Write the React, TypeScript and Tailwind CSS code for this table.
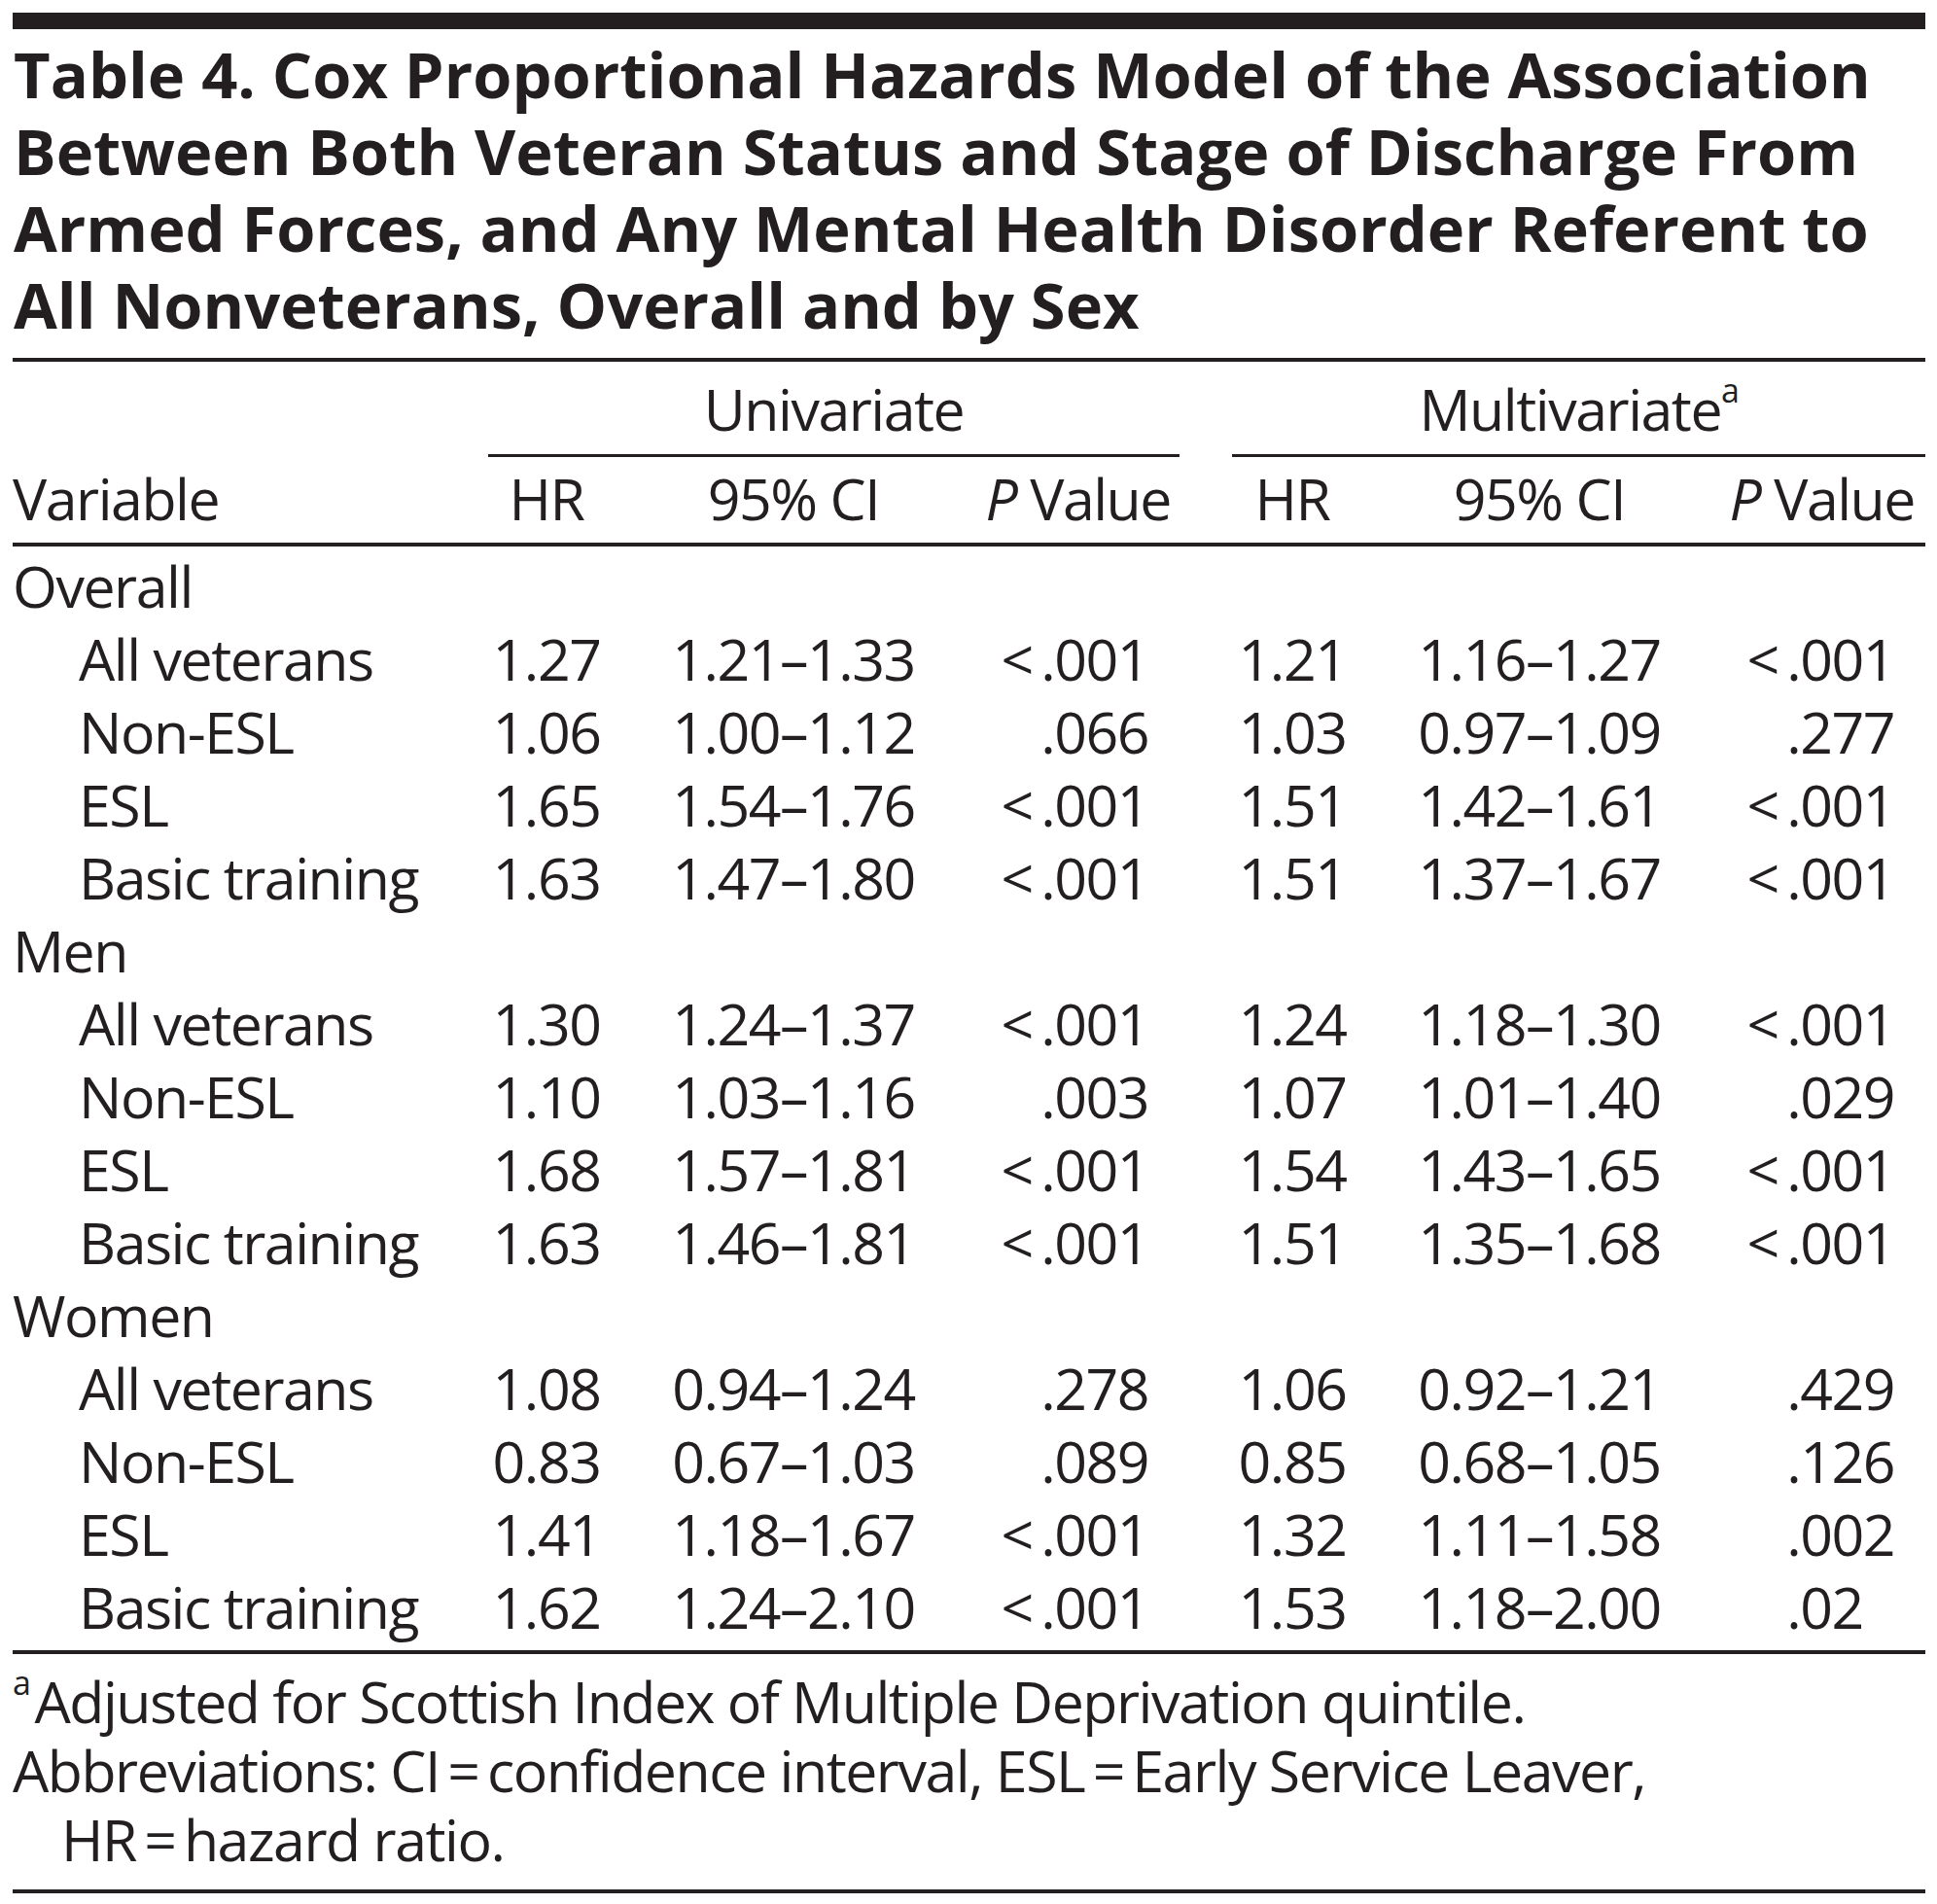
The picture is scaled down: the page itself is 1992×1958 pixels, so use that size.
const rows: [string, string[]][] = [
  ["Overall", []],
  ["All veterans", ["1.27", "1.21–1.33", "<\u2009.001", "1.21", "1.16–1.27", "<\u2009.001"]],
  ["Non-ESL", ["1.06", "1.00–1.12", ".066", "1.03", "0.97–1.09", ".277"]],
  ["ESL", ["1.65", "1.54–1.76", "<\u2009.001", "1.51", "1.42–1.61", "<\u2009.001"]],
  ["Basic training", ["1.63", "1.47–1.80", "<\u2009.001", "1.51", "1.37–1.67", "<\u2009.001"]],
  ["Men", []],
  ["All veterans", ["1.30", "1.24–1.37", "<\u2009.001", "1.24", "1.18–1.30", "<\u2009.001"]],
  ["Non-ESL", ["1.10", "1.03–1.16", ".003", "1.07", "1.01–1.40", ".029"]],
  ["ESL", ["1.68", "1.57–1.81", "<\u2009.001", "1.54", "1.43–1.65", "<\u2009.001"]],
  ["Basic training", ["1.63", "1.46–1.81", "<\u2009.001", "1.51", "1.35–1.68", "<\u2009.001"]],
  ["Women", []],
  ["All veterans", ["1.08", "0.94–1.24", ".278", "1.06", "0.92–1.21", ".429"]],
  ["Non-ESL", ["0.83", "0.67–1.03", ".089", "0.85", "0.68–1.05", ".126"]],
  ["ESL", ["1.41", "1.18–1.67", "<\u2009.001", "1.32", "1.11–1.58", ".002"]],
  ["Basic training", ["1.62", "1.24–2.10", "<\u2009.001", "1.53", "1.18–2.00", ".02"]],
];

// pad short p values so the decimal points line up
function PVal({ v }: { v: string }) {
  if (v === ".02") {
    return (
      <span>
        {v}
        <span className="invisible">1</span>
      </span>
    );
  }
  return <span>{v}</span>;
}

function Rule({ h }: { h: string }) {
  return <div className={`col-span-8 bg-[#231f20] ${h}`} />;
}

export default function App() {
  return (
    <div className="w-[1992px] h-[1958px] bg-white text-[#231f20] [font-family:'Open_Sans',sans-serif] pl-[13px] pt-[13px]">
      <div className="w-[1967px]">
        <div className="h-[17px] bg-[#231f20]" />
        <h1 className="mt-[7px] pl-[1px] text-[65px] leading-[79px] font-bold tracking-normal whitespace-nowrap">
          Table 4. Cox Proportional Hazards Model of the Association
          <br />
          Between Both Veteran Status and Stage of Discharge From
          <br />
          Armed Forces, and Any Mental Health Disorder Referent to
          <br />
          All Nonveterans, Overall and by Sex
        </h1>
        <div className="mt-[15px] h-[4px] bg-[#231f20]" />

        <div className="grid grid-cols-[489px_120px_388px_203px_54px_124px_384px_205px] text-[59px] leading-[75px] tracking-[-0.025em]">
          {/* spanning headers */}
          <div className="col-span-8 h-[11px]" />
          <div className="h-[75px]" />
          <div className="col-span-3 h-[75px] text-center">Univariate</div>
          <div className="h-[75px]" />
          <div className="col-span-3 h-[75px] text-center">
            Multivariate
            <sup className="text-[34px] leading-none relative -top-[8px] align-super">a</sup>
          </div>
          <div className="h-[9px]" />
          <div className="col-span-3 h-[3px] mt-[9px] bg-[#231f20]" />
          <div />
          <div className="col-span-3 h-[3px] mt-[9px] bg-[#231f20]" />

          {/* column headers */}
          <div className="col-span-8 h-[5px]" />
          <div className="h-[75px]">Variable</div>
          <div className="h-[75px] text-center">HR</div>
          <div className="h-[75px] text-center">95% CI</div>
          <div className="h-[75px] text-right pr-[9px]">
            <i>P</i> Value
          </div>
          <div />
          <div className="h-[75px] text-center">HR</div>
          <div className="h-[75px] text-center">95% CI</div>
          <div className="h-[75px] text-right pr-[11px]">
            <i>P</i> Value
          </div>
          <div className="col-span-8 h-[8px]" />
          <Rule h="h-[4px]" />
          <div className="col-span-8 h-[3px]" />

          {rows.map(([label, v], i) =>
            v.length === 0 ? (
              <div key={i} className="col-span-8 h-[75px]">
                {label}
              </div>
            ) : (
              <div key={i} className="col-span-8 grid grid-cols-subgrid h-[75px]">
                <div className="pl-[68px] whitespace-nowrap">{label}</div>
                <div className="text-center">{v[0]}</div>
                <div className="text-center">{v[1]}</div>
                <div className="text-right pr-[32px]">
                  <PVal v={v[2]} />
                </div>
                <div />
                <div className="text-center">{v[3]}</div>
                <div className="text-center">{v[4]}</div>
                <div className="text-right pr-[32px]">
                  <PVal v={v[5]} />
                </div>
              </div>
            )
          )}

          <div className="col-span-8 h-[7px]" />
          <Rule h="h-[4px]" />
        </div>

        <div className="mt-[13px] text-[59px] leading-[71px] tracking-[-0.025em]">
          <p className="whitespace-nowrap">
            <sup className="text-[34px] leading-none relative -top-[8px] align-super mr-[5px]">a</sup>
            Adjusted for Scottish Index of Multiple Deprivation quintile.
          </p>
          <p className="pl-[50px] -indent-[50px] whitespace-nowrap">
            Abbreviations: CI{"\u2009=\u2009"}confidence interval, ESL{"\u2009=\u2009"}Early Service Leaver,
            <br />
            HR{"\u2009=\u2009"}hazard ratio.
          </p>
        </div>
        <div className="mt-[16px] h-[4px] bg-[#231f20]" />
      </div>
    </div>
  );
}
